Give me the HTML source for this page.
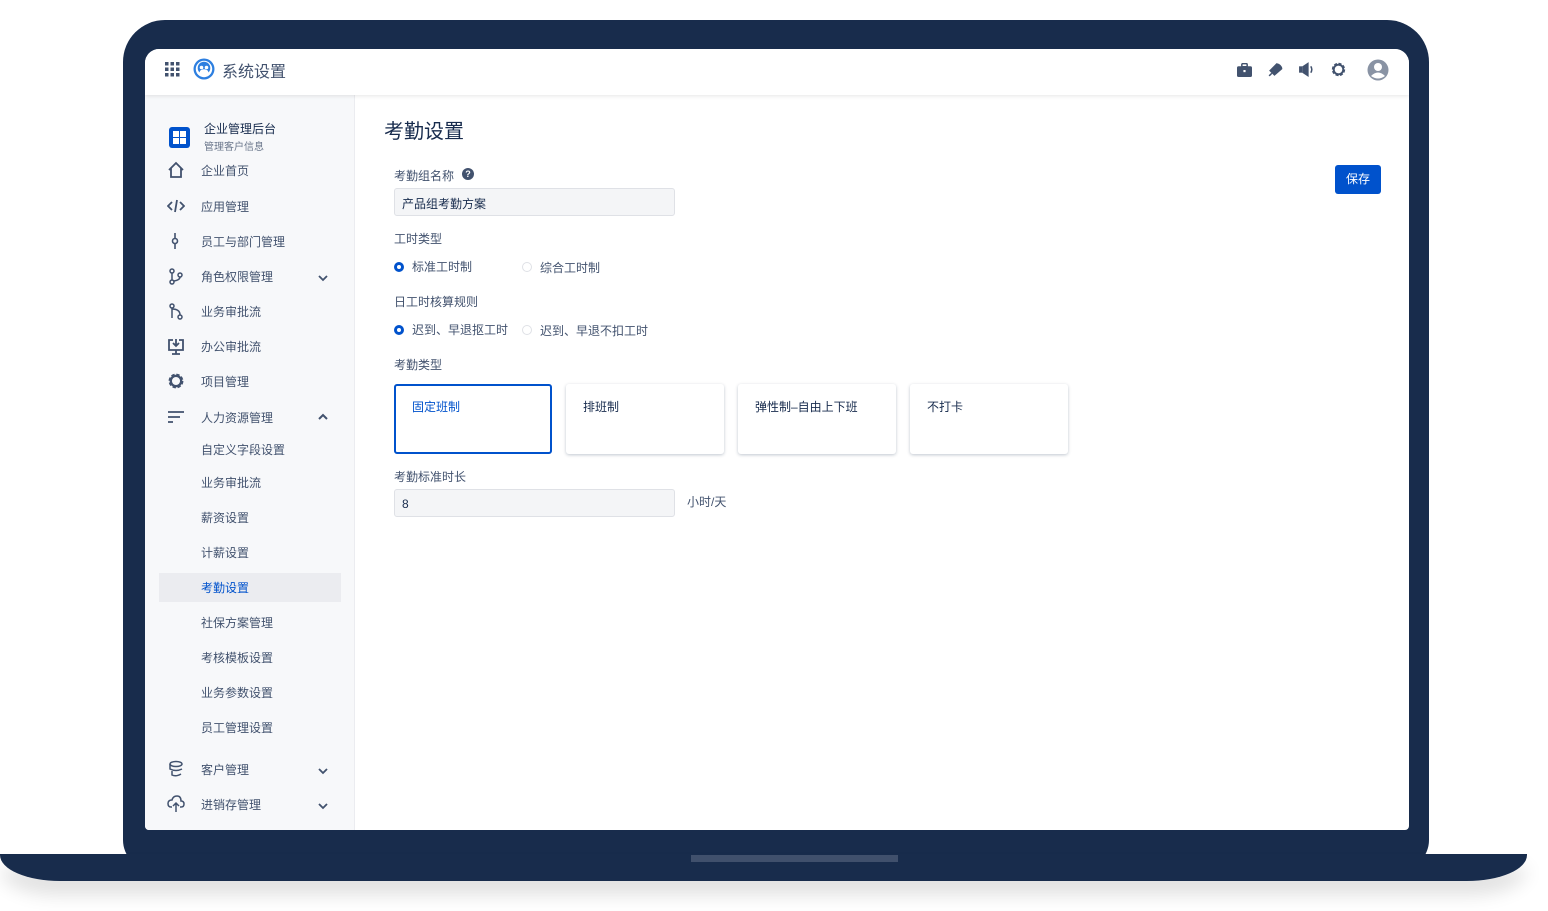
<!DOCTYPE html>
<html><head><meta charset="utf-8"><style>
*{margin:0;padding:0;box-sizing:border-box}
body{width:1548px;height:911px;background:#fff;position:relative;overflow:hidden;font-family:"Liberation Sans","Noto Sans CJK SC",sans-serif;color:#42526e}
.a{position:absolute}
.frame{left:123px;top:20px;width:1306px;height:850px;background:#182c4c;border-radius:42px 42px 30px 30px}
.base{left:0;top:854px;width:1527px;height:27px;background:#182c4c;border-radius:0 0 60px 60px/0 0 26px 26px;box-shadow:0 14px 18px rgba(0,0,0,.12)}
.notch{left:691px;top:855px;width:207px;height:7px;background:#40506c}
.screen{left:145px;top:49px;width:1264px;height:781px;background:#fff;border-radius:14px 14px 4px 4px;overflow:hidden}
.hdr{left:0;top:0;width:1264px;height:46px;background:#fff;box-shadow:0 1px 4px rgba(0,0,0,.1);z-index:2}
.side{left:0;top:46px;width:210px;height:735px;background:#f7f8fa;border-right:1px solid #ebecf0}
.t{font-size:12px;color:#42526e;white-space:nowrap;margin-top:-1px}
.lab{font-size:12px;color:#42526e;white-space:nowrap;margin-top:-1px}
.card{width:158px;height:70px;border-radius:3px;box-shadow:0 1px 3px rgba(9,30,66,.25);background:#fff;font-size:12px;padding:14px 17px;color:#172b4d}
.inp{background:#f4f5f7;border:1px solid #dfe1e6;border-radius:3px;height:28px;font-size:12px;color:#172b4d;padding:6px 7px}
.r{width:10px;height:10px;border-radius:50%}
</style></head><body>
<div class="a frame"></div>
<div class="a base"></div>
<div class="a notch"></div>
<div class="a screen">
 <div class="a hdr">
  <svg class="a" style="left:20px;top:13px" width="15" height="15" viewBox="0 0 15 15" fill="#42526e"><rect x="0" y="0" width="3.5" height="3.5"/><rect x="5.5" y="0" width="3.5" height="3.5"/><rect x="11" y="0" width="3.5" height="3.5"/><rect x="0" y="5.5" width="3.5" height="3.5"/><rect x="5.5" y="5.5" width="3.5" height="3.5"/><rect x="11" y="5.5" width="3.5" height="3.5"/><rect x="0" y="11" width="3.5" height="3.5"/><rect x="5.5" y="11" width="3.5" height="3.5"/><rect x="11" y="11" width="3.5" height="3.5"/></svg>
  <svg class="a" style="left:48px;top:9px" width="22" height="22" viewBox="0 0 22 22"><circle cx="11" cy="11" r="10.5" fill="#2d7fe0"/><circle cx="11" cy="11" r="8.2" fill="#fff"/><circle cx="11" cy="10" r="6.3" fill="#2d7fe0"/><ellipse cx="11" cy="14.5" rx="4.5" ry="3.3" fill="#fff"/><circle cx="8.5" cy="9.5" r="1.8" fill="#fff"/><circle cx="13.5" cy="9.5" r="1.8" fill="#fff"/></svg>
  <div class="a" style="left:77px;top:9px;font-size:16px;color:#42526e">系统设置</div>
  <svg class="a" style="left:1092px;top:14px" width="15" height="14" viewBox="0 0 14 13" fill="#42526e"><rect x="0" y="3" width="14" height="10" rx="1.5"/><rect x="4.5" y="0.5" width="5" height="3" rx="1" fill="none" stroke="#42526e" stroke-width="1.4"/><rect x="6" y="6.5" width="2" height="2" fill="#fff"/></svg>
  <svg class="a" style="left:1122px;top:12px" width="17" height="17" viewBox="0 0 16 16" fill="#42526e"><path d="M2 9 L9 2 Q14 3 14.5 7.5 L7 14 Z"/><path d="M1.5 13.5 L4 11 L5 12 L2.5 14.5Z"/></svg>
  <svg class="a" style="left:1153px;top:12px" width="17" height="17" viewBox="0 0 16 16" fill="#42526e"><rect x="1" y="5" width="3" height="6"/><path d="M4 5 L10 1 V15 L4 11Z"/><path d="M12 5 Q14 8 12 11" stroke="#42526e" fill="none" stroke-width="1.4"/></svg>
  <svg class="a" style="left:1185px;top:12px" width="17" height="17" viewBox="0 0 16 16"><circle cx="8" cy="8" r="5" fill="none" stroke="#42526e" stroke-width="2.6" stroke-dasharray="2.6 1.3"/><circle cx="8" cy="8" r="4.5" fill="none" stroke="#42526e" stroke-width="1.8"/></svg>
  <svg class="a" style="left:1222px;top:10px" width="22" height="22" viewBox="0 0 22 22"><circle cx="11" cy="11" r="10.5" fill="#8993a4"/><circle cx="11" cy="8" r="4" fill="#fff"/><path d="M4 17 Q11 10 18 17 Q11 22 4 17Z" fill="#fff"/></svg>
 </div>
 <div class="a side">
  <div class="a" style="left:24px;top:32px;width:21px;height:21px;background:#0052cc;border-radius:3px"></div>
  <div class="a" style="left:28px;top:36px;width:6px;height:6px;background:#fff"></div><div class="a" style="left:35px;top:36px;width:6px;height:6px;background:#fff"></div>
  <div class="a" style="left:28px;top:43px;width:6px;height:6px;background:#fff"></div><div class="a" style="left:35px;top:43px;width:6px;height:6px;background:#fff"></div>
  <div class="a t" style="left:59px;top:26px;color:#172b4d">企业管理后台</div>
  <div class="a" style="left:59px;top:43px;font-size:10px;color:#6b778c">管理客户信息</div>
 </div>
 <div class="a t" style="left:56px;top:114px">企业首页</div>
 <svg class="a" style="left:22px;top:112px" width="18" height="18" viewBox="0 0 18 18" fill="none" stroke="#42526e" stroke-width="1.8"><path d="M2 9 L9 2 L16 9 M4 7 V16 H14 V7"/></svg>
 <div class="a t" style="left:56px;top:150px">应用管理</div>
 <svg class="a" style="left:22px;top:149px" width="18" height="16" viewBox="0 0 18 16" fill="none" stroke="#42526e" stroke-width="1.8"><path d="M5 4L1 8L5 12M13 4L17 8L13 12M10 2L8 14"/></svg>
 <div class="a t" style="left:56px;top:185px">员工与部门管理</div>
 <svg class="a" style="left:25px;top:183px" width="10" height="18" viewBox="0 0 10 18" fill="none" stroke="#42526e" stroke-width="1.6"><circle cx="5" cy="9" r="2.5"/><path d="M5 1V6.5M5 11.5V17"/></svg>
 <div class="a t" style="left:56px;top:220px">角色权限管理</div>
 <svg class="a" style="left:23px;top:219px" width="16" height="17" viewBox="0 0 16 17" fill="none" stroke="#42526e" stroke-width="1.5"><circle cx="4" cy="3" r="2"/><circle cx="4" cy="14" r="2"/><circle cx="12" cy="7" r="2"/><path d="M4 5V12M12 9Q12 12 6 13"/></svg>
 <div class="a t" style="left:56px;top:255px">业务审批流</div>
 <svg class="a" style="left:23px;top:254px" width="16" height="17" viewBox="0 0 16 17" fill="none" stroke="#42526e" stroke-width="1.5"><circle cx="4" cy="3" r="2"/><circle cx="12" cy="14" r="2"/><path d="M4 5V15M4 6Q12 6 12 12"/></svg>
 <div class="a t" style="left:56px;top:290px">办公审批流</div>
 <svg class="a" style="left:22px;top:289px" width="18" height="17" viewBox="0 0 18 17" fill="none" stroke="#42526e" stroke-width="1.8"><path d="M6 2H2V12H16V2H12M9 1V8M6 5L9 8L12 5M9 12V16M5 16H13"/></svg>
 <div class="a t" style="left:56px;top:325px">项目管理</div>
 <svg class="a" style="left:22px;top:323px" width="18" height="18" viewBox="0 0 16 16"><circle cx="8" cy="8" r="5.2" fill="none" stroke="#42526e" stroke-width="2.8" stroke-dasharray="2.7 1.4"/><circle cx="8" cy="8" r="4.6" fill="none" stroke="#42526e" stroke-width="2"/></svg>
 <div class="a t" style="left:56px;top:361px">人力资源管理</div>
 <svg class="a" style="left:22px;top:362px" width="18" height="12" viewBox="0 0 18 12" stroke="#42526e" stroke-width="1.8"><path d="M1 1H17M1 6H13M1 11H6"/></svg>
 <svg class="a" style="left:172px;top:364px" width="12" height="8" viewBox="0 0 12 8" fill="none" stroke="#42526e" stroke-width="2"><path d="M2 6L6 2L10 6"/></svg>
 <svg class="a" style="left:172px;top:225px" width="12" height="8" viewBox="0 0 12 8" fill="none" stroke="#42526e" stroke-width="1.8"><path d="M2 2L6 6L10 2"/></svg>
 <div class="a t" style="left:56px;top:393px">自定义字段设置</div>
 <div class="a t" style="left:56px;top:426px">业务审批流</div>
 <div class="a t" style="left:56px;top:461px">薪资设置</div>
 <div class="a t" style="left:56px;top:496px">计薪设置</div>
 <div class="a" style="left:14px;top:524px;width:182px;height:29px;background:#ebecf0"></div>
 <div class="a t" style="left:56px;top:531px;color:#0052cc">考勤设置</div>
 <div class="a t" style="left:56px;top:566px">社保方案管理</div>
 <div class="a t" style="left:56px;top:601px">考核模板设置</div>
 <div class="a t" style="left:56px;top:636px">业务参数设置</div>
 <div class="a t" style="left:56px;top:671px">员工管理设置</div>
 <div class="a t" style="left:56px;top:713px">客户管理</div>
 <svg class="a" style="left:22px;top:711px" width="18" height="18" viewBox="0 0 18 18" fill="none" stroke="#42526e" stroke-width="1.5"><ellipse cx="9" cy="4" rx="6" ry="2.5"/><path d="M3 4V9Q9 12 15 9M5 11V15Q9 17 14 14"/></svg>
 <svg class="a" style="left:172px;top:718px" width="12" height="8" viewBox="0 0 12 8" fill="none" stroke="#42526e" stroke-width="1.8"><path d="M2 2L6 6L10 2"/></svg>
 <div class="a t" style="left:56px;top:748px">进销存管理</div>
 <svg class="a" style="left:22px;top:746px" width="18" height="18" viewBox="0 0 18 18" fill="none" stroke="#42526e" stroke-width="1.5"><path d="M5 12H4Q1 12 1 8.5Q1 5 5 5Q6 1 10 1Q14 1 14 6Q17 6 17 9Q17 12 14 12H13M9 17V8M6 11L9 8L12 11"/></svg>
 <svg class="a" style="left:172px;top:753px" width="12" height="8" viewBox="0 0 12 8" fill="none" stroke="#42526e" stroke-width="1.8"><path d="M2 2L6 6L10 2"/></svg>

 <div class="a" style="left:239px;top:66px;font-size:20px;color:#172b4d">考勤设置</div>
 <div class="a lab" style="left:249px;top:119px">考勤组名称</div>
 <div class="a" style="left:317px;top:119px;width:12px;height:12px;border-radius:50%;background:#42526e;color:#fff;font-size:9px;font-weight:bold;text-align:center;line-height:12px">?</div>
 <div class="a inp" style="left:249px;top:139px;width:281px">产品组考勤方案</div>
 <div class="a" style="left:1190px;top:116px;width:46px;height:29px;background:#0052cc;border-radius:3px;color:#fff;font-size:12px;text-align:center;line-height:28px">保存</div>
 <div class="a lab" style="left:249px;top:182px">工时类型</div>
 <div class="a r" style="left:249px;top:213px;border:3px solid #0052cc"></div>
 <div class="a lab" style="left:267px;top:210px">标准工时制</div>
 <div class="a r" style="left:377px;top:213px;border:1px solid #dfe1e6"></div>
 <div class="a lab" style="left:395px;top:211px">综合工时制</div>
 <div class="a lab" style="left:249px;top:245px">日工时核算规则</div>
 <div class="a r" style="left:249px;top:276px;border:3px solid #0052cc"></div>
 <div class="a lab" style="left:267px;top:273px">迟到、早退抠工时</div>
 <div class="a r" style="left:377px;top:276px;border:1px solid #dfe1e6"></div>
 <div class="a lab" style="left:395px;top:274px">迟到、早退不扣工时</div>
 <div class="a lab" style="left:249px;top:308px">考勤类型</div>
 <div class="a card" style="left:249px;top:335px;border:2px solid #0052cc;box-shadow:none;color:#0052cc;padding:12px 16px">固定班制</div>
 <div class="a card" style="left:421px;top:335px">排班制</div>
 <div class="a card" style="left:593px;top:335px">弹性制–自由上下班</div>
 <div class="a card" style="left:765px;top:335px">不打卡</div>
 <div class="a lab" style="left:249px;top:420px">考勤标准时长</div>
 <div class="a inp" style="left:249px;top:440px;width:281px;padding-top:7px">8</div>
 <div class="a lab" style="left:542px;top:445px">小时/天</div>
</div>
</body></html>
